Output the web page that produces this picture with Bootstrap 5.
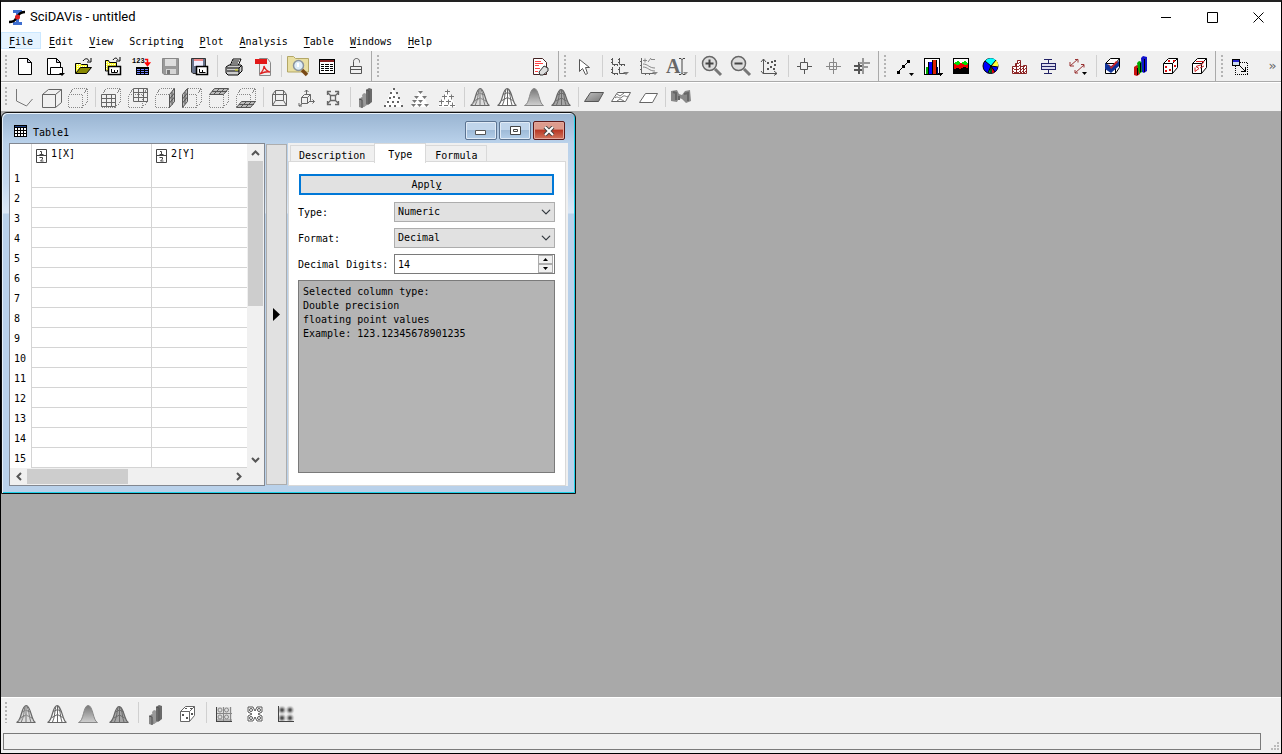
<!DOCTYPE html>
<html lang="en">
<head>
<meta charset="utf-8">
<meta name="viewport" content="width=device-width, initial-scale=1">
<title>SciDAVis - untitled</title>
<link href="https://cdn.jsdelivr.net/npm/bootstrap@5.3.0/dist/css/bootstrap.min.css" rel="stylesheet">
<style>
:root { --face:#f0f0f0; --edge:#adadad; --line:#dcdcdc; }
body { font: 10px/14px "DejaVu Sans Mono","Liberation Mono",monospace; color:#000; background:#a9a9a9; }
button,input,select { font:inherit; color:inherit; }
.app { border:1px solid #000; border-top:2px solid #222; min-height:100vh; }
.app-title { height:30px; background:#fff; padding-left:7px; font:13px/16px Roboto,"Noto Sans",sans-serif; }
.cap-btn { width:46px; height:30px; border:0; background:none; padding:0; display:flex; align-items:center; justify-content:center; }
.menus { background:#fff; height:18px; }
.menus a { color:#000; text-decoration:none; padding:1px 7px; border:1px solid transparent; height:17px; line-height:16px; }
.menus a.current { background:#e5f3ff; border-color:#cce8ff; }
.menus u { text-underline-offset:2px; }
.bar { background:var(--face); border-top:1px solid #fff; border-bottom:1px solid #aaa; }
.bar.last { border-bottom:0; padding-bottom:3px; }
.grp { border-right:1px solid #aaa; margin-right:1px; }
.grp.open { border-right:0; margin-right:0; }
.grip { width:10px; flex:none; margin:4px 0; background:linear-gradient(#b4b4b4,#b4b4b4) 0 0/2px 2px; -webkit-mask:none; }
.grip { background:repeating-linear-gradient(#b4b4b4 0 2px,transparent 2px 4px) 4px 0/2px 100% no-repeat; }
.vsep { width:6px; flex:none; margin:4px 0; background:linear-gradient(#d0d0d0,#d0d0d0) center/1px 100% no-repeat; }
.tool { border:0; background:none; padding:3px 2px 2px; flex:none; display:block; line-height:0; }
.tool svg { width:25px; height:25px; display:block; }
.bar.plot3d .tool { padding:2px 1px 1px; }
.bar.last .tool { padding:4px 3px 0; }
.more { color:#666; font-size:13px; border:0; background:none; width:25px; padding:0 0 0 8px; }
.px { shape-rendering:crispEdges; }
.workspace { background:#a9a9a9; }
.sub { width:575px; border:1px solid #111; border-radius:6px 6px 0 0; background:linear-gradient(#99b4d1,#b9d1ea 30px,#c4d8ee 70px,#dbe8f6 100px,#b9d1ea 101px); box-shadow:inset 1px 1px #e8f2fb, inset -1px -1px #1cd0e8; padding:0 7px 7px; }
.sub-title { height:30px; padding:6px 3px 0 4px; }
.sub-title .name { padding:7px 0 0 1px; }
.sub-btn { width:32px; height:19px; border:1px solid #5b7391; border-radius:2px; box-shadow:inset 0 0 0 1px #dfeaf6; background:linear-gradient(#c0d5eb 45%,#9fbbd8 50%,#b3cee9); padding:0; display:flex; align-items:center; justify-content:center; margin-top:2px; }
.sub-btn.shut { border-color:#5d1a1a; box-shadow:inset 0 0 0 1px #e3a79c; background:linear-gradient(#dd9b8d 40%,#b93a26 50%,#d2765f); }
.sheet-frame { width:256px; border:1px solid #828790; background:var(--face); }
.sheet { width:237px; table-layout:fixed; background:#fff; border-collapse:separate; border-spacing:0; }
.sheet th,.sheet td { padding:0; font-weight:400; border-right:1px solid #d4d4d4; }
.sheet tr > :last-child { border-right:0; }
.sheet thead th { height:24px; vertical-align:top; padding:3px 0 0 4px; }
.sheet tbody th { height:20px; padding:2px 0 0 4px; }
.sheet tbody td { border-bottom:1px solid #d4d4d4; }
.sheet .rowno { width:22px; }
.sheet .col-a { width:120px; }
.half { width:11px; height:14px; flex:none; margin-right:4px; margin-top:2px; }
.bar-v { width:17px; }
.bar-v .arrow,.bar-h .arrow { width:17px; height:17px; display:flex; align-items:center; justify-content:center; flex:none; }
.bar-v .thumb { width:15px; height:145px; margin-left:1px; background:#cdcdcd; }
.bar-h { width:237px; margin-top:1px; height:16px; }
.bar-h .arrow { height:15px; }
.bar-h .thumb { width:101px; height:15px; background:#cdcdcd; }
.splitter { width:21px; border:1px solid var(--edge); background:#e1e1e1; padding:0 2px 0 0; margin:1px; display:flex; align-items:center; justify-content:center; }
.side { background:var(--face); padding:0 2px 0 0; }
.side .nav-tabs { border:0; padding-left:2px; height:18px; align-items:flex-end; }
.side .nav-link { color:#000; padding:2px 9px 0 8px; height:17px; border:1px solid #d9d9d9; border-bottom:0; border-radius:0; margin:0; background:var(--face); line-height:15px; }
.side .nav-link.active { background:#fff; height:20px; padding:3px 13px; position:relative; border-color:#d9d9d9; margin:0 0 -1px -1px; color:#000; }
.side .nav-link.active + .nav-link { border-left:0; padding-left:9px; }
.pane { border:1px solid #d9d9d9; background:#fff; padding:12px 10px 12px 9px; }
.apply { border:2px solid #0078d7; background:#e1e1e1; height:21px; padding:1px 0 0; line-height:16px; margin:0 1px 1px; }
.field { height:20px; line-height:21px; margin-top:6px; }
.field label { width:96px; flex:none; white-space:nowrap; }
.box { height:20px; border:1px solid var(--edge); border-radius:0; background-color:#e1e1e1; padding:0 3px; font-size:10px; line-height:18px; color:#000; }
select.box { background-position:right 3px center; background-size:10px 10px; }
.spin { border:1px solid #7a7a7a; background:#fff; height:20px; padding-right:1px; }
.spin input { border:0; padding:0 3px; min-width:0; appearance:textfield; background:none; outline:0; }
.spin input::-webkit-inner-spin-button { appearance:none; margin:0; }
.step { width:15px; height:9px; padding:0; border:1px solid #acacac; background:var(--face); display:flex; align-items:center; justify-content:center; }
.note { border:1px solid #7a7a7a; background:#b4b4b4; height:193px; margin-top:6px; padding:4px; }
.status { background:var(--face); padding:3px 20px 3px 2px; position:relative; }
.status-box { border:1px solid #7a7a7a; height:17px; }
.sizer { position:absolute; right:1px; bottom:1px; }
</style>
</head>
<body>
<svg width="0" height="0" class="position-absolute" aria-hidden="true">
  <defs>
    <linearGradient id="gs" x1="0" x2="0" y1="0" y2="1"><stop offset="0" stop-color="#777"/><stop offset="1" stop-color="#d0d0d0"/></linearGradient>
    <linearGradient id="gf" x1="0" x2="1" y1="0" y2="1"><stop offset="0" stop-color="#c0c0c0"/><stop offset="1" stop-color="#777"/></linearGradient>
    <pattern id="yel" width="2" height="2" patternUnits="userSpaceOnUse"><rect width="2" height="2" fill="#ff3"/><rect width="1" height="1" fill="#fff"/></pattern>
    <pattern id="redh" width="3" height="3" patternUnits="userSpaceOnUse"><rect width="3" height="3" fill="#fff"/><rect width="2" height="1" fill="#933"/><rect y="2" x="2" width="1" height="1" fill="#933"/></pattern>
    <radialGradient id="spot"><stop offset="0" stop-color="#333"/><stop offset=".35" stop-color="#777"/><stop offset="1" stop-color="#ccc" stop-opacity=".2"/></radialGradient>
  </defs>
  <symbol id="mesh" viewBox="0 0 25 25"><path d="M2.500 20.500C8 19 7 4 12 3.500S17 19 21.500 20.500z" fill="#ddd" stroke="#666" stroke-width="1.200"/><path d="M7 20.500C10 15 10 9 11 4M12 20.500V4M17 20.500C15 15 15 8 13 4M8 10l4-2 4 2M6 16l6-3 6 3" fill="none" stroke="#777"/><path d="M4 19l9-6 6 5M9 13l3-6 4 6" fill="none" stroke="#aaa" stroke-width=".7"/></symbol>
  <symbol id="grid" viewBox="0 0 25 25"><path d="M2.500 20.500C8 19 7 4 12 3.500S17 19 21.500 20.500z" fill="#fff" stroke="#666" stroke-width="1.200"/><path d="M7.500 20C10 15 9.500 9 11 4M12.500 20.500V4M17 20C15 15 15.500 8 13.500 4M8.500 9.500l4-2 4 2M7 15.500l5.500-3 5 3" fill="none" stroke="#666"/></symbol>
  <symbol id="solid" viewBox="0 0 25 25"><path d="M2.500 20.500C8 19 7 4 12 3.500S17 19 21.500 20.500z" fill="url(#gs)" stroke="#888"/></symbol>
  <symbol id="shade" viewBox="0 0 25 25"><path d="M2.500 20.500C8 19 7 5 12 4.500S17 19 21.500 20.500z" fill="#a6a6a6" stroke="#666" stroke-width="1.200"/><path d="M7.500 20C10 15 10 9 11 5M12.500 20.500V5M17 20C15 15 15.500 9 13.500 5M8.500 10l4-2 4 2M7 16l5.500-3 5 3" fill="none" stroke="#6c6c6c"/></symbol>
  <symbol id="bars" viewBox="0 0 25 25"><path d="M5 14l3-2 3 1v8l-3 2-3-1z" fill="#888"/><path d="M8 10l2-2 3 1v11l-3 2z" fill="#999"/><path d="M12 5l3-2 3 1v13l-4 3-2-1z" fill="#6a6a6a"/><path d="M12 5l3 1v13M5 14l3 1v8" stroke="#555" fill="none"/></symbol>
  <symbol id="dbox" viewBox="0 0 25 25"><g fill="none" stroke="#888" stroke-dasharray="1 1" class="px"><path d="M2.500 9.500h14v13h-14zM2.500 9.500l5-6h14v13l-5 6M16.500 9.500l5-6"/></g></symbol>
</svg>

<div class="app d-flex flex-column">
  <header class="app-title d-flex align-items-center">
    <svg width="18" height="17" viewBox="0 0 18 17"><path d="M5 1h9v3h-3v9h3v3H5v-3h3V4H5z" fill="#3f6fd0"/><path d="M1 13c7 0 6-3 8-5s2-5 8-5" fill="none" stroke="#000" stroke-width="2.500"/><circle cx="9.500" cy="8" r="2.500" fill="#e02020"/></svg>
    <span class="ms-1 flex-grow-1">SciDAVis - untitled</span>
    <button class="cap-btn" aria-label="Minimize"><svg width="11" height="11"><path d="M0 5.500h10" stroke="#000"/></svg></button>
    <button class="cap-btn" aria-label="Maximize"><svg width="11" height="11"><path d="M.5.5h10v10H.5z" fill="none" stroke="#000"/></svg></button>
    <button class="cap-btn" aria-label="Close"><svg width="11" height="11"><path d="M.5.5l10 10m0-10l-10 10" stroke="#000"/></svg></button>
  </header>
  <nav class="menus d-flex">
    <a href="#" class="current"><u>F</u>ile</a><a href="#"><u>E</u>dit</a><a href="#"><u>V</u>iew</a><a href="#">Scriptin<u>g</u></a><a href="#"><u>P</u>lot</a><a href="#"><u>A</u>nalysis</a><a href="#"><u>T</u>able</a><a href="#"><u>W</u>indows</a><a href="#"><u>H</u>elp</a>
  </nav>

  <div class="bar d-flex">
    <div class="grp d-flex"><div class="grip"></div>
      <button class="tool" aria-label="New project"><svg><path d="M5.500 4.500h9l4 4v12h-13z" fill="#fff" stroke="#000"/><path d="M14.500 4.500v4h4z" fill="#ccd" stroke="#000"/></svg></button>
      <button class="tool" aria-label="New window"><svg><path d="M5.500 4.500h9l4 4v12h-13z" fill="#fff" stroke="#000"/><path d="M14.500 4.500v4h4z" fill="#ccd" stroke="#000"/><path d="M8.500 13.500h12v7h-12z" fill="#fff" stroke="#000"/><path d="M17 19h6l-3 3z"/></svg></button>
      <button class="tool" aria-label="Open"><svg><path d="M4.500 19V9.500h5l1 1h6V14" fill="url(#yel)" stroke="#000"/><path d="M4.500 19.500l5-6h11l-5 6z" fill="#880" stroke="#000"/><path d="M12 7c2-3 5-3 6 0M20 4v4h-4" fill="none" stroke="#000"/></svg></button>
      <button class="tool" aria-label="Open template"><svg><path d="M5.500 17V6.500h3l1 2h7v8z" fill="url(#yel)" stroke="#000"/><path d="M13 6c2-3 4-2 5 0M20 3v4h-4" fill="none" stroke="#000"/><path d="M8.500 12.500h12v8h-12z" fill="#fff" stroke="#000" stroke-width="1.500"/><path d="M11.500 15v3.500h6M14.500 18v-2M17.500 18v-2" fill="none" stroke="#000"/></svg></button>
      <button class="tool" aria-label="Import ASCII"><svg><text x="3" y="9" font-size="7" font-weight="700" font-family="Liberation Mono,monospace">123</text><path d="M16 5.500h2.500V10M16.500 9l2 2.500 2-2.500z" stroke="red" fill="none" stroke-width="1.500"/><path d="M7 13h13v8H7z"/><path d="M8 15h3v1H8zm4 0h3v1h-3zm4 0h3v1h-3zM8 17h3v1H8zm4 0h3v1h-3zm4 0h3v1h-3zM8 19h3v1H8zm4 0h3v1h-3zm4 0h3v1h-3z" fill="#78f"/></svg></button>
      <button class="tool" aria-label="Save" disabled><svg><path d="M4.500 4.500h16v16H6l-1.500-1.500z" fill="#999" stroke="#888"/><path d="M7 5h11v7H7z" fill="#ddd"/><path d="M8 15h10v5H8z" fill="#d5d5d5"/><path d="M9 16h3v4H9z" fill="#777"/></svg></button>
      <button class="tool" aria-label="Save template"><svg><path d="M4.500 4.500h14v15H6l-1.500-1.500z" fill="#68738c" stroke="#333"/><path d="M7 5h9v7H7z" fill="#eef"/><path d="M7 5h9v2H7z" fill="#e88"/><path d="M9.500 12.500h11v8h-11z" fill="#fff" stroke="#000" stroke-width="1.500"/><path d="M12.500 15v3.500h6M15.500 18v-2" fill="none" stroke="#000"/></svg></button>
      <div class="vsep"></div>
      <button class="tool" aria-label="Print"><svg><path d="M8 12l3-7h8l-3 7z" fill="#fff" stroke="#000"/><path d="M11 7h6M10 9h6" stroke="#000"/><path d="M4 13l3-2h12l1 1v5l-4 4H6l-2-2z" fill="#ccc" stroke="#000"/><path d="M5 14h12l3-3M5 17h12M17 14v6" stroke="#000" fill="none"/><path d="M13 16h3" stroke="#dd0" stroke-width="1"/></svg></button>
      <button class="tool" aria-label="Export PDF"><svg><path d="M8.500 4.500h8l3 4v13h-11z" fill="#eee" stroke="#888"/><path d="M4 5h12v5H4z" fill="#e21818"/><path d="M9 20c3-3 4-6 4-8 1 4 3 5 6 6-4-1-6 0-10 2" fill="none" stroke="#d22" stroke-width="1.300"/></svg></button>
      <div class="vsep"></div>
      <button class="tool" aria-label="Project explorer"><svg><path d="M1.500 18V2.500h6l2 2h13V18z" fill="#e9dfa2" stroke="#b3a767"/><circle cx="12.500" cy="11.500" r="5" fill="#dcecf8" stroke="#8a939b" stroke-width="1.500"/><path d="M12 9v4" stroke="#fff" stroke-width="2"/><path d="M16 16l5 5" stroke="#7a4a16" stroke-width="3.500"/></svg></button>
      <button class="tool" aria-label="Results log"><svg class="px"><path d="M4 5h16v15H4z"/><path d="M5 8h14v11H5z" fill="#fff"/><path d="M5 6h14v2H5z" fill="#822"/><path d="M6 10.500h3m1 0h4m1 0h3M6 12.500h3m1 0h4m1 0h3M6 14.500h3m1 0h4m1 0h3M6 16.500h3m1 0h4m1 0h3" stroke="#000"/></svg></button>
      <button class="tool" aria-label="Lock toolbars"><svg><path d="M6.500 12.500h11v7h-11zM6.500 15.500h11M9.500 12.500V7.500c0-4 6-4 6 0v1" fill="none" stroke="#555"/></svg></button>
    </div>
    <div class="grp d-flex flex-grow-1"><div class="grip"></div>
      <button class="tool ms-auto me-1" aria-label="Edit note"><svg><path d="M6.500 4.500h9l4 4v12h-13z" fill="#fff" stroke="#422"/><path d="M8 7.500h6M8 9.500h8M8 11.500h4M8 14.500h5M8 17.500h3" stroke="#f44"/><path d="M12 18l5-6 4 2v3l-5 4h-3z" fill="#ddd" stroke="#333"/></svg></button>
    </div>
    <div class="grp d-flex"><div class="grip"></div>
      <button class="tool" aria-label="Pointer"><svg><path d="M7.500 5.500v12l3-3 3 6 2-1-2-6h4z" fill="#fff" stroke="#555"/></svg></button>
      <div class="vsep"></div>
      <button class="tool" aria-label="Add layer"><svg><path d="M5.500 4v6.500H11M12.500 4v6.500H18M5.500 13v6.500H11M12.500 13v6.500H18M4 5.500h1M4 8.500h1M11 5.500h1M11 8.500h1M4 15.500h1M4 18.500h1M11 15.500h1M7.500 11v1M10.500 11v1M14.500 11v1M17.500 11v1M7.500 20v1M10.500 20v1" fill="none" stroke="#555"/><path d="M16 18h6l-3 3z" fill="#777"/></svg></button>
      <button class="tool" aria-label="Add curve"><svg><path d="M5.500 4v15.500H18M4 7.500h1M4 11.500h1M4 15.500h1M9.500 19v2M13.500 19v2" fill="none" stroke="#666"/><path d="M7 10c5 0 6 4 12 4M7 13c5 0 6 4 12 4M7 6.500h4m-2-2v4M12 8l3-4M15 5.500h4" fill="none" stroke="#888"/><path d="M16 18h6l-3 3z" fill="#888"/></svg></button>
      <button class="tool" aria-label="Add text"><svg><text x="1" y="19" font-size="20" font-weight="700" fill="#666" font-family="Liberation Serif,serif">A</text><path d="M14 4.500h2l1 1 1-1h2M17 5v15M14 20.500h2l1-1 1 1h2" fill="none" stroke="#444"/><path d="M18 18h5l-2.500 3z" fill="#888"/></svg></button>
      <div class="vsep"></div>
      <button class="tool" aria-label="Zoom in"><svg><circle cx="9.500" cy="9.500" r="7" fill="#ddd" stroke="#666" stroke-width="1.500"/><path d="M5.500 9.500h8m-4-4v8" stroke="#444" stroke-width="2"/><path d="M15 15l6 6" stroke="#777" stroke-width="3"/></svg></button>
      <button class="tool" aria-label="Zoom out"><svg><circle cx="9.500" cy="9.500" r="7" fill="#ddd" stroke="#666" stroke-width="1.500"/><path d="M5.500 9.500h8" stroke="#444" stroke-width="2"/><path d="M15 15l6 6" stroke="#777" stroke-width="3"/></svg></button>
      <button class="tool" aria-label="Rescale"><svg><path d="M5.500 5v15M3 8l2.500-3L8 8M3 17l2.500 3M5 19.500h14M16 17l3 2.500-3 2" fill="none" stroke="#555"/><path d="M9 8h2v2H9zm4-1h2v2h-2zm3 3h2v2h-2zm-4 2h2v2h-2zm-3 2h2v2H9zm6 0h2v2h-2zM16 6h2v2h-2z" fill="#555"/></svg></button>
      <div class="vsep"></div>
      <button class="tool" aria-label="Screen reader"><svg><path d="M7.500 8.500h7v7h-7zM11.500 4v4M11.500 16v4M4 12.500h4M15 12.500h4" fill="none" stroke="#555"/></svg></button>
      <button class="tool" aria-label="Data reader"><svg><path d="M7.500 8.500h7v7h-7zM11.500 4v16M4 12.500h15" fill="none" stroke="#888"/></svg></button>
      <button class="tool" aria-label="Select range"><svg><path d="M8 8v12M3 12h9M3 16h9" stroke="#555" stroke-width="2"/><path d="M12 4v16M8 9h11M12 13h5" stroke="#999" stroke-width="2"/></svg></button>
    </div>
    <div class="grp d-flex"><div class="grip"></div>
      <button class="tool" aria-label="Plot lines"><svg><path d="M6 18L16 8" stroke="#000"/><path d="M5 17h3v3H5zm5-6h3v3h-3zm5-5h3v3h-3zM17 19h5l-2.500 3z"/></svg></button>
      <button class="tool" aria-label="Plot bars"><svg class="px"><path d="M3.500 4.500h15v16h-15z" fill="#fff" stroke="#000"/><path d="M5 13h3v7H5z" fill="#0a0"/><path d="M8 8h3v12H8z" fill="#00f"/><path d="M12 6h3v14h-3z" fill="#d20"/><path d="M15 13h2v7h-2z" fill="#006"/><path d="M7.500 8v12M11.500 6v14M15.500 6v14" stroke="#000"/><path d="M16 19h6l-3 3z"/></svg></button>
      <button class="tool" aria-label="Plot area"><svg class="px"><path d="M3.500 4.500h15v15h-15z" fill="#fff" stroke="#000"/><path d="M4 9l4-2 3 2 4-2 3 2v6H4z" fill="#0d0"/><path d="M4 10l4 1 3-2 4 2 3-1v5H4z" fill="#e00"/><path d="M4 15l3-1 3 1 4-2 4 1v6H4z"/></svg></button>
      <button class="tool" aria-label="Plot pie"><svg><circle cx="11.500" cy="12" r="7.500" fill="#00f" stroke="#000"/><path d="M12 12L6 7a8 8 0 0 1 11-1z" fill="#0ff"/><path d="M12 12l5-6a8 8 0 0 1 2 7z" fill="#ff3"/><path d="M12 12l7 1-3 5z" fill="#00f"/><path d="M12 12l4 6-3 1z" fill="#e00"/><path d="M12 12l1 7-4-1z" fill="#0c0"/><path d="M6 7l6 5 5-6M12 12l7 1M12 12l4 6M12 12l-3 7M12 12v7" stroke="#000" fill="none"/></svg></button>
      <button class="tool" aria-label="Histogram"><svg><path d="M4.500 19.500v-7h3v-3h2v-3h3v6h3v-1h3v8z" fill="url(#redh)" stroke="#822"/><path d="M8.500 9v10M12.500 9v10M15.500 12v7" stroke="#822"/></svg></button>
      <button class="tool" aria-label="Box plot"><svg class="px"><path d="M4.500 9.500h14v6h-14zM5 12.500h14M7 5.500h8M7 19.500h8M11.500 6v3M11.500 16v3" fill="#dde" stroke="#226"/></svg></button>
      <button class="tool" aria-label="Vector plot"><svg><path d="M4 12l8-7M9 5.500h3v3M9 19l9-8M9 16v3h3M4 8v4h4M15 10.500h3v3" fill="none" stroke="#933"/><path d="M16 18h5l-2.500 3z"/></svg></button>
      <div class="vsep"></div>
      <button class="tool" aria-label="3D surface"><svg><path d="M4.500 9.500h10v10h-10zl5-5h9v9l-4 6M14.500 9.500l4-5" fill="#fff" stroke="#000"/><path d="M4 9l6 3 8-5v5l-8 7-6-4z" fill="#139"/><path d="M7 9l3 4 5-6 2 1-7 7z" fill="#c22"/></svg></button>
      <button class="tool" aria-label="3D bars"><svg><path d="M4 13l3-2 3 1v8l-3 2-3-1z" fill="#c11"/><path d="M7 9l2-2 3 1v10l-3 2z" fill="#0a0"/><path d="M11 4l2-2 4 1v14l-3 2-2-1z" fill="#11c"/><path d="M14.500 5v13M7.500 14v7M10.500 9v9" stroke="#000"/></svg></button>
      <button class="tool" aria-label="3D scatter"><svg><path d="M4.500 9.500h9v10h-9zl5-5h9v9l-5 6M13.500 9.500l5-5" fill="#fff" stroke="#000"/><path d="M9 6h2v2H9zm5 0h2v2h-2zM6 12h2v2H6zm4 3h2v2h-2zm5-4h2v2h-2zM6 16h2v2H6z" fill="#d11"/></svg></button>
      <button class="tool" aria-label="3D trajectory"><svg><path d="M4.500 9.500h9v10h-9zl5-5h9v9l-5 6M13.500 9.500l5-5" fill="#fff" stroke="#000"/><path d="M8 7.500h8l-2 3-6 2 3 2-4 3v-4M12 14l4-2" fill="none" stroke="#c22"/></svg></button>
    </div>
    <div class="grp open d-flex"><div class="grip"></div>
      <button class="tool" aria-label="Resize window"><svg class="px"><path d="M6.500 8.500h12v12h-12z" fill="none" stroke="#000" stroke-dasharray="1 1"/><path d="M3.500 5.500h7v6h-7z" fill="#cde" stroke="#000"/><path d="M4 6h6v2H4z" fill="#22c"/><path d="M10 11l6 6M16 13v4h-4" stroke="#000" fill="none"/></svg></button>
      <button class="more" aria-label="More tools">»</button>
    </div>
  </div>

  <div class="bar plot3d d-flex">
    <div class="grip"></div>
    <button class="tool" aria-label="Axes"><svg><path d="M4.500 4v12l10 5 6-7" fill="none" stroke="#777"/></svg></button>
    <button class="tool" aria-label="Box"><svg><path d="M3.500 9.500h13v13h-13zl6-5h13v13l-6 5M16.500 9.500l6-5" fill="none" stroke="#666"/></svg></button>
    <button class="tool" aria-label="Frame"><svg><use href="#dbox"/></svg></button>
    <div class="vsep"></div>
    <button class="tool" aria-label="Front grid"><svg><use href="#dbox"/><path d="M2.500 9.500h14v12h-14zM2.500 13.500h14M2.500 17.500h14M7.500 9.500v12M12.500 9.500v12" fill="none" stroke="#666"/></svg></button>
    <button class="tool" aria-label="Back grid"><svg><use href="#dbox"/><path d="M7.500 3.500h14v13h-14zM7.500 7.500h14M7.500 12.500h14M12.500 3.500v13M17.500 3.500v13" fill="none" stroke="#666"/></svg></button>
    <button class="tool" aria-label="Right grid"><svg><use href="#dbox"/><path d="M16.500 9.500l5-6v13l-5 6zM16.500 14l5-6M16.500 18l5-6M19 7v12" fill="#bbb" stroke="#555"/></svg></button>
    <button class="tool" aria-label="Left grid"><svg><use href="#dbox"/><path d="M2.500 9.500l5-6v13l-5 6zM2.500 14l5-6M2.500 18l5-6M5 7v12" fill="#bbb" stroke="#555"/></svg></button>
    <button class="tool" aria-label="Ceiling grid"><svg><use href="#dbox"/><path d="M2.500 9.500l5-6h14l-5 6zM5 6.500h15M7 9l5-5M12 9l5-5" fill="#bbb" stroke="#555"/></svg></button>
    <button class="tool" aria-label="Floor grid"><svg><use href="#dbox"/><path d="M2.500 22.500l5-6h14l-5 6zM5 19.500h15M7 22l5-5M12 22l5-5" fill="#bbb" stroke="#555"/></svg></button>
    <div class="vsep"></div>
    <button class="tool" aria-label="Perspective"><svg><path d="M8.500 5.500h8v10h-8zM5.500 9.500h14v11h-14zM5.500 9.500l3-4M16.500 5.500l3 4M8.500 15.500l-3 5M16.500 15.500l3 5" fill="none" stroke="#666"/></svg></button>
    <button class="tool" aria-label="Reset rotation"><svg><path d="M7.500 12.500h6v6h-6zl3-3h6v6l-3 3M13.500 12.500l3-3M12.500 10V5M10.500 7l2-2 2 2M16 16.500h4M18.500 14.500l2 2-2 2M8 19l-3 2M5 18v3h3" fill="none" stroke="#666"/></svg></button>
    <button class="tool" aria-label="Fit frame"><svg><path d="M9.500 10.500h5v5h-5zM6 7l4 4M18 7l-4 4M6 19l4-4M18 19l-4-4M6.500 10V6.500H10M14 6.500h3.500V10M6.500 16v3.500H10M14 19.500h3.500V16" fill="none" stroke="#666" stroke-width="1.300"/></svg></button>
    <div class="vsep"></div>
    <button class="tool" aria-label="Bars"><svg><use href="#bars"/></svg></button>
    <button class="tool" aria-label="Scatter dots"><svg class="px"><path d="M12 3L3 22h19z" fill="#fff"/><path d="M12 3h2v2h-2zM9 7h2v2H9zm6 0h2v2h-2zm-3 4h2v2h-2zm-4 1h2v2H8zm9 0h2v2h-2zM6 16h2v2H6zm5 0h2v2h-2zm5 0h2v2h-2zM3 20h2v2H3zm5 0h2v2H8zm5 0h2v2h-2zm7 0h2v2h-2z" fill="#666"/></svg></button>
    <button class="tool" aria-label="Scatter cones"><svg><path d="M12 4L3 22h18z" fill="#fff"/><path d="M10 6h5l-2.500 3zM6 11h5l-2.500 3zm8 0h5l-2.500 3zM4 15h5l-2.500 3zm6 0h5l-2.500 3zM3 19h5l-2.500 3zm6 0h5l-2.500 3zm7 0h5l-2.500 3z" fill="#777"/></svg></button>
    <button class="tool" aria-label="Scatter crosses"><svg><path d="M12 4L3 22h18z" fill="#fff"/><path d="M10 6.500h5m-2.500-2v5M7 11.500h5m-2.500-2v5M14 11.500h5m-2.500-2v5M4 16.500h5m-2.500-2v5M11 16.500h5m-2.500-2v5M4 20.500h3M9 20.500h4M15 20.500h5m-2.500-3v5" stroke="#777"/></svg></button>
    <div class="vsep"></div>
    <button class="tool" aria-label="Wireframe hidden"><svg><use href="#mesh"/></svg></button>
    <button class="tool" aria-label="Wireframe"><svg><use href="#grid"/></svg></button>
    <button class="tool" aria-label="Polygons"><svg><use href="#solid"/></svg></button>
    <button class="tool" aria-label="Mesh polygons"><svg><use href="#shade"/></svg></button>
    <div class="vsep"></div>
    <button class="tool" aria-label="Floor data"><svg><path d="M2.500 16.500l6-9h13l-5 9z" fill="url(#gf)" stroke="#555"/></svg></button>
    <button class="tool" aria-label="Floor isolines"><svg><path d="M2.500 16.500l6-9h13l-5 9z" fill="#fff" stroke="#666"/><path d="M8 9l3 2 4-3M6 13c3-3 4 2 7-1s4 1 6-1M8 16l3-2 4 2" fill="none" stroke="#777"/></svg></button>
    <button class="tool" aria-label="Empty floor"><svg><path d="M3.500 17.500l6-9h12l-5 9z" fill="#fff" stroke="#666"/></svg></button>
    <div class="vsep"></div>
    <button class="tool" aria-label="Animate"><svg><path d="M2 6l6-1 2 4 3 1 3-4 5-1 1 11-5 2-4-4-3-1-2 4-6-1z" fill="#888"/><path d="M4 7l3 1v7M15 9l4-1v8M10 11v4" fill="none" stroke="#666" stroke-width="2"/></svg></button>
  </div>

  <main class="workspace flex-grow-1">
    <section class="sub" aria-label="Table1">
      <div class="sub-title d-flex">
        <svg class="px mt-1 me-1 flex-shrink-0" width="15" height="15"><path d="M1 2h13v12H1z"/><path d="M2 5h2v2H2zm3 0h2v2H5zm3 0h2v2H8zm3 0h2v2h-2zM2 8h2v2H2zm3 0h2v2H5zm3 0h2v2H8zm3 0h2v2h-2zM2 11h2v2H2zm3 0h2v2H5zm3 0h2v2H8zm3 0h2v2h-2z" fill="#fff"/><path d="M2 3h11v1H2z" fill="#248"/></svg>
        <span class="name flex-grow-1">Table1</span>
        <div class="d-flex align-items-start" style="gap:2px">
          <button class="sub-btn" aria-label="Minimize table"><svg class="mt-1" width="12" height="6"><path d="M.5.500h10v4H.5z" fill="#fff" stroke="#555"/></svg></button>
          <button class="sub-btn" aria-label="Restore table"><svg width="11" height="9"><path d="M.5.500h10v8H.5zM3.500 3.500h4v2h-4z" fill="#fff" stroke="#444"/></svg></button>
          <button class="sub-btn shut" aria-label="Close table"><svg width="12" height="10"><path d="M2 1l8 8M10 1L2 9" stroke="#444" stroke-width="4"/><path d="M2 1l8 8M10 1L2 9" stroke="#fff" stroke-width="2"/></svg></button>
        </div>
      </div>
      <div class="d-flex">
        <div class="sheet-frame flex-shrink-0">
          <div class="d-flex">
            <table class="sheet">
              <colgroup><col class="rowno"><col class="col-a"><col></colgroup>
              <thead><tr><th></th>
                <th><div class="d-flex"><svg class="half"><path d="M.5.500h10v13H.5zM0 6.500h11M4 2.500h1.500V6M3.500 5.500h4M3.500 8.500h3v1.500l-2 2h3" fill="none" stroke="#444"/></svg>1[X]</div></th>
                <th><div class="d-flex"><svg class="half"><path d="M.5.500h10v13H.5zM0 6.500h11M4 2.500h1.500V6M3.500 5.500h4M3.500 8.500h3v1.500l-2 2h3" fill="none" stroke="#444"/></svg>2[Y]</div></th></tr></thead>
              <tbody>
                <tr><th>1</th><td></td><td></td></tr><tr><th>2</th><td></td><td></td></tr><tr><th>3</th><td></td><td></td></tr>
                <tr><th>4</th><td></td><td></td></tr><tr><th>5</th><td></td><td></td></tr><tr><th>6</th><td></td><td></td></tr>
                <tr><th>7</th><td></td><td></td></tr><tr><th>8</th><td></td><td></td></tr><tr><th>9</th><td></td><td></td></tr>
                <tr><th>10</th><td></td><td></td></tr><tr><th>11</th><td></td><td></td></tr><tr><th>12</th><td></td><td></td></tr>
                <tr><th>13</th><td></td><td></td></tr><tr><th>14</th><td></td><td></td></tr><tr><th>15</th><td></td><td></td></tr>
              </tbody>
            </table>
            <div class="bar-v d-flex flex-column">
              <div class="arrow"><svg width="9" height="6"><path d="M1 5l3.500-3.500L8 5" fill="none" stroke="#555" stroke-width="2"/></svg></div>
              <div class="thumb"></div>
              <div class="arrow mt-auto"><svg width="9" height="6"><path d="M1 1l3.500 3.500L8 1" fill="none" stroke="#555" stroke-width="2"/></svg></div>
            </div>
          </div>
          <div class="bar-h d-flex">
            <div class="arrow"><svg width="6" height="9"><path d="M5 1L1.500 4.500 5 8" fill="none" stroke="#555" stroke-width="2"/></svg></div>
            <div class="thumb"></div>
            <div class="arrow ms-auto"><svg width="6" height="9"><path d="M1 1l3.500 3.500L1 8" fill="none" stroke="#555" stroke-width="2"/></svg></div>
          </div>
        </div>
        <button class="splitter flex-shrink-0" aria-label="Hide controls"><svg width="8" height="13"><path d="M1 0l7 6.500L1 13z"/></svg></button>
        <div class="side flex-grow-1 d-flex flex-column">
          <div class="nav nav-tabs" role="tablist">
            <button class="nav-link" role="tab">Description</button><button class="nav-link active" role="tab" aria-selected="true">Type</button><button class="nav-link" role="tab">Formula</button>
          </div>
          <div class="pane flex-grow-1 d-flex flex-column">
            <button class="apply">Appl<u>y</u></button>
            <div class="field d-flex"><label for="type">Type:</label><select id="type" class="form-select box"><option>Numeric</option></select></div>
            <div class="field d-flex"><label for="format">Format:</label><select id="format" class="form-select box"><option>Decimal</option></select></div>
            <div class="field d-flex"><label for="digits">Decimal Digits:</label>
              <div class="spin d-flex flex-grow-1"><input id="digits" type="number" value="14" class="flex-grow-1"><div><button class="step" aria-label="More digits"><svg width="5" height="3"><path d="M0 3l2.500-3L5 3z"/></svg></button><button class="step" aria-label="Fewer digits"><svg width="5" height="3"><path d="M0 0h5L2.500 3z"/></svg></button></div></div>
            </div>
            <div class="note">Selected column type:<br>Double precision<br>floating point values<br>Example: 123.12345678901235</div>
          </div>
        </div>
      </div>
    </section>
  </main>

  <div class="bar last d-flex">
    <div class="grip"></div>
    <button class="tool" aria-label="3D wireframe hidden"><svg><use href="#mesh"/></svg></button>
    <button class="tool" aria-label="3D wireframe"><svg><use href="#grid"/></svg></button>
    <button class="tool" aria-label="3D polygons"><svg><use href="#solid"/></svg></button>
    <button class="tool" aria-label="3D mesh polygons"><svg><use href="#shade"/></svg></button>
    <div class="vsep"></div>
    <button class="tool" aria-label="3D bar plot"><svg><use href="#bars"/></svg></button>
    <button class="tool" aria-label="3D scatter plot"><svg><path d="M5.500 9.500h9v10h-9zl5-5h9v9l-5 6M14.500 9.500l5-5" fill="#fff" stroke="#666"/><path d="M10 6h2v1h-2zm5 0h2v1h-2zM7 12h2v2H7zm4 3h2v2h-2zm5-4h2v2h-2z" fill="#555"/></svg></button>
    <div class="vsep"></div>
    <button class="tool" aria-label="Contour color fill"><svg><path d="M4 5h16v15H4z" fill="#ddd"/><g fill="none" stroke="#888"><circle cx="8" cy="8" r="2"/><circle cx="14.500" cy="8" r="2"/><circle cx="8" cy="15" r="2"/><circle cx="14.500" cy="15" r="2"/><path d="M5 11.500h15M11.500 5v14M18.500 5v14M5 18h15"/></g><path d="M4.500 5v15M4 19.500h16" stroke="#444"/></svg></button>
    <button class="tool" aria-label="Contour lines"><svg><path d="M4 5h16v15H4z" fill="#fff"/><g fill="none" stroke="#555"><circle cx="8" cy="8" r="1.500"/><circle cx="16" cy="8" r="1.500"/><circle cx="8" cy="16" r="1.500"/><circle cx="16" cy="16" r="1.500"/><path d="M5 5h5l2 4 2-4h5v5l-4 2 4 2v5h-5l-2-4-2 4H5v-5l4-2-4-2z"/></g></svg></button>
    <button class="tool" aria-label="Gray scale map"><svg><g fill="url(#spot)"><circle cx="8" cy="8" r="4.500"/><circle cx="16" cy="8" r="4.500"/><circle cx="8" cy="16" r="4.500"/><circle cx="16" cy="16" r="4.500"/></g><path d="M4.500 4v16M4 19.500h16" stroke="#444"/></svg></button>
  </div>
  <footer class="status">
    <div class="status-box"></div>
    <svg class="sizer" width="10" height="10"><path d="M7 0h2v2H7zM4 3h2v2H4zM7 3h2v2H7zM1 6h2v2H1zM4 6h2v2H4zM7 6h2v2H7z" fill="#bbb"/></svg>
  </footer>
</div>
<script src="https://cdn.jsdelivr.net/npm/bootstrap@5.3.0/dist/js/bootstrap.bundle.min.js"></script>
</body>
</html>
